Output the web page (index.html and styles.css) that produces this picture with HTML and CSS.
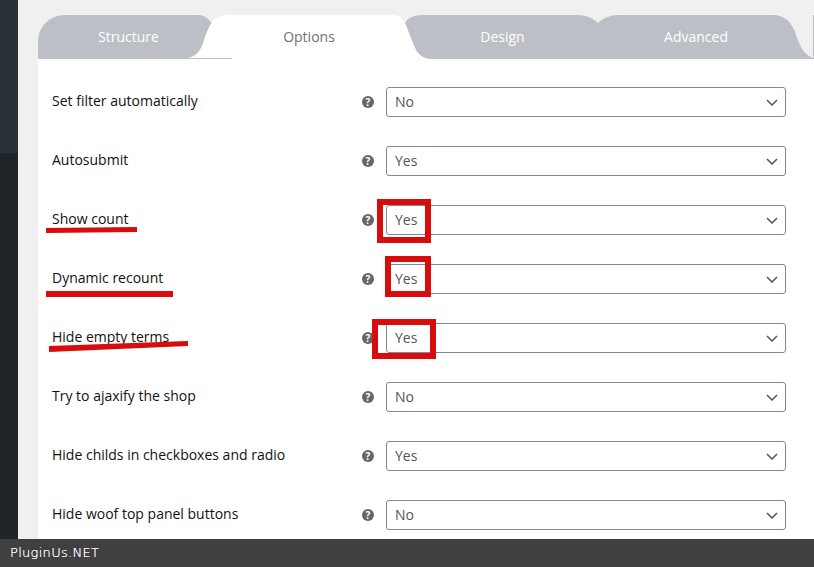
FILE: index.html
```html
<!DOCTYPE html>
<html lang="en">
<head>
<meta charset="utf-8">
<title>Options</title>
<link rel="stylesheet" href="styles.css">
</head>
<body>
<div class="stage">
  <div class="upper">
    <aside class="sidebar"><div class="side-top"></div><div class="side-bottom"></div></aside>
    <main class="content">
      <nav class="tabs">
        <svg class="tab-shapes" viewBox="38 15 776 44" width="776" height="44" aria-hidden="true">
          <path class="tab-grey" d="M38 59V42C38 26 50 15 66 15H198C204 15 208 18 212 24V59Z"/>
          <path class="tab-grey" d="M405 23C408 18 413 15 422 15H578C586 15 593 18 598 23V59H405Z"/>
          <path class="tab-grey" d="M598 23C603 18 610 15 618 15H772C785 15 791 22 795 32C799 43 802 54 813 58V59H598Z"/>
          <rect class="tab-grey" x="813" y="15" width="1" height="44"/>
          <rect class="tab-grey" x="187" y="58" width="45" height="1"/>
          <path class="tab-white" d="M187 58C195 57 200 52 203 43C206 34 208 28 211 24C214 18 219 15 228 15H392C400 15 404 20 406 25C409 33 411 38 413 43C416 52 421 59 432 59H232V58Z"/>
        </svg>
        <a class="tab">Structure</a>
        <a class="tab tab-active">Options</a>
        <a class="tab">Design</a>
        <a class="tab">Advanced</a>
      </nav>
      <section class="panel">
        <div class="row"><span class="label">Set filter automatically</span><span class="help">?</span><div class="select"><span>No</span><svg class="chev" viewBox="0 0 12 7" width="12" height="7"><path d="M1 1l5 5 5-5"/></svg></div></div>
        <div class="row"><span class="label">Autosubmit</span><span class="help">?</span><div class="select"><span>Yes</span><svg class="chev" viewBox="0 0 12 7" width="12" height="7"><path d="M1 1l5 5 5-5"/></svg></div></div>
        <div class="row"><span class="label">Show count</span><span class="help">?</span><div class="select"><span>Yes</span><svg class="chev" viewBox="0 0 12 7" width="12" height="7"><path d="M1 1l5 5 5-5"/></svg></div></div>
        <div class="row"><span class="label">Dynamic recount</span><span class="help">?</span><div class="select"><span>Yes</span><svg class="chev" viewBox="0 0 12 7" width="12" height="7"><path d="M1 1l5 5 5-5"/></svg></div></div>
        <div class="row"><span class="label">Hide empty terms</span><span class="help">?</span><div class="select"><span>Yes</span><svg class="chev" viewBox="0 0 12 7" width="12" height="7"><path d="M1 1l5 5 5-5"/></svg></div></div>
        <div class="row"><span class="label">Try to ajaxify the shop</span><span class="help">?</span><div class="select"><span>No</span><svg class="chev" viewBox="0 0 12 7" width="12" height="7"><path d="M1 1l5 5 5-5"/></svg></div></div>
        <div class="row"><span class="label">Hide childs in checkboxes and radio</span><span class="help">?</span><div class="select"><span>Yes</span><svg class="chev" viewBox="0 0 12 7" width="12" height="7"><path d="M1 1l5 5 5-5"/></svg></div></div>
        <div class="row"><span class="label">Hide woof top panel buttons</span><span class="help">?</span><div class="select"><span>No</span><svg class="chev" viewBox="0 0 12 7" width="12" height="7"><path d="M1 1l5 5 5-5"/></svg></div></div>
      </section>
    </main>
  </div>
  <footer class="bar">PluginUs.NET</footer>
  <svg class="marks" viewBox="0 0 814 567" width="814" height="567" aria-hidden="true">
    <path d="M46 228L137 227V232L46 233Z"/>
    <path d="M46 291H173V297H46Z"/>
    <path d="M49 346L188 341V346L49 352Z"/>
    <path class="box" d="M380 202H428V240H380Z"/>
    <path class="box" d="M388 259H428V294H388Z"/>
    <path class="box" d="M375 322H433V356H375Z"/>
  </svg>
</div>
</body>
</html>
```

FILE: styles.css
```css
* { box-sizing: border-box; }
html, body { margin: 0; padding: 0; }
body { background: #f0f0f0; font-family: "Open Sans", "Liberation Sans", sans-serif; }
.stage { position: relative; width: 814px; height: 567px; overflow: hidden; display: flex; flex-direction: column; }
.upper { flex: 1; display: flex; min-height: 0; }
.sidebar { width: 18px; display: flex; flex-direction: column; }
.side-top { height: 153px; background: #2a3138; }
.side-bottom { flex: 1; background: #1f2428; }
.content { flex: 1; padding: 15px 0 0 20px; display: flex; flex-direction: column; min-width: 0; }
.tabs { position: relative; height: 44px; display: grid; grid-template-columns: 181px 180px 207px 180px; }
.tab-shapes { position: absolute; left: 0; top: 0; display: block; }
.tab-grey { fill: #bcc0c6; }
.tab-white { fill: #fff; }
.tab { position: relative; text-align: center; font-size: 14px; line-height: 44px; color: #fff; }
.tab-active { color: #707070; }
.panel { flex: 1; background: #fff; padding: 14px 28px 0 14px; }
.row { height: 59px; padding-top: 14px; display: flex; align-items: flex-start; }
.label { width: 310px; height: 30px; font-size: 14px; font-weight: 500; line-height: 28px; color: #111; }
.help { width: 12px; height: 12px; margin: 8.5px 12px 0 0; border-radius: 50%; background: #666; color: #fff; font-size: 10px; font-weight: 700; line-height: 12px; text-align: center; }
.select { flex: 1; height: 30px; padding: 0 7px 2px 8px; display: flex; align-items: center; justify-content: space-between; background: #fff; border: 1px solid #7e8993; border-radius: 3px; font-size: 14px; color: #555; }
.chev { display: block; margin-top: 2px; }
.chev path { fill: none; stroke: #555; stroke-width: 1.5; }
.bar { height: 28px; padding-left: 10px; background: #404040; color: #fff; font-family: "DejaVu Sans", sans-serif; font-weight: 200; font-size: 13px; letter-spacing: 0.3px; line-height: 27px; text-shadow: 0 0 0.5px #fff; }
.marks { position: absolute; left: 0; top: 0; }
.marks path { fill: #d80c0c; }
.marks path.box { fill: none; stroke: #d80c0c; stroke-width: 6; }
```
